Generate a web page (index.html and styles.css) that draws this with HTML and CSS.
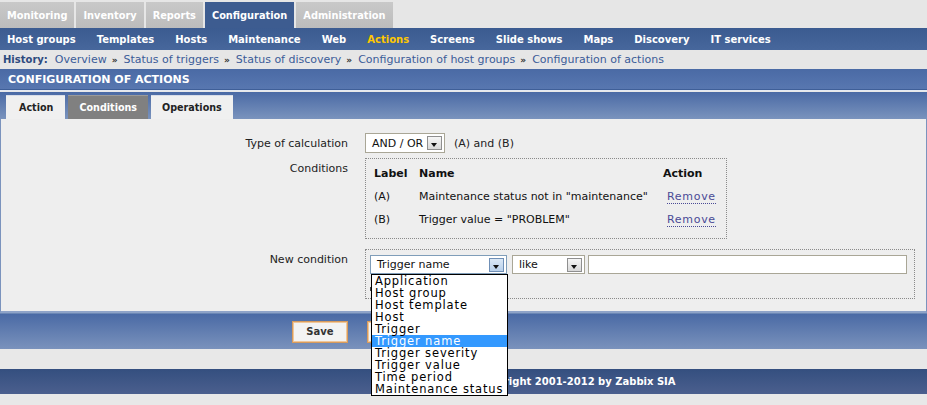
FILE: index.html
```html
<!DOCTYPE html>
<html>
<head>
<meta charset="utf-8">
<link rel="stylesheet" href="styles.css">
</head>
<body>
<div class="topnav">
  <span class="ttab">Monitoring</span>
  <span class="ttab">Inventory</span>
  <span class="ttab">Reports</span>
  <span class="ttab active">Configuration</span>
  <span class="ttab">Administration</span>
</div>
<div class="submenu">
  <span>Host groups</span>
  <span>Templates</span>
  <span>Hosts</span>
  <span>Maintenance</span>
  <span>Web</span>
  <span class="cur">Actions</span>
  <span>Screens</span>
  <span>Slide shows</span>
  <span>Maps</span>
  <span>Discovery</span>
  <span>IT services</span>
</div>
<div class="history">
  <b>History:</b>
  <a>Overview</a><i>»</i><a>Status of triggers</a><i>»</i><a>Status of discovery</a><i>»</i><a>Configuration of host groups</a><i>»</i><a>Configuration of actions</a>
</div>
<div class="header">CONFIGURATION OF ACTIONS</div>
<div class="tabbar">
  <span class="ftab">Action</span>
  <span class="ftab sel-tab">Conditions</span>
  <span class="ftab">Operations</span>
</div>
<div class="panel">
  <div class="form">
    <div class="lbl mid">Type of calculation</div>
    <div class="val row">
      <span class="sel calc"><span class="stext">AND / OR</span><span class="arr"></span></span>
      <span class="expr">(A) and (B)</span>
    </div>

    <div class="lbl top">Conditions</div>
    <div class="val">
      <div class="condbox">
        <div class="ctable">
          <div class="th">Label</div><div class="th">Name</div><div class="th">Action</div>
          <div>(A)</div><div>Maintenance status not in "maintenance"</div><div><a class="rm">Remove</a></div>
          <div>(B)</div><div>Trigger value = "PROBLEM"</div><div><a class="rm">Remove</a></div>
        </div>
      </div>
    </div>

    <div class="lbl top spaced">New condition</div>
    <div class="val spaced">
      <div class="newbox">
        <div class="newrow">
          <span class="dd-wrap">
            <span class="sel tname"><span class="stext">Trigger name</span><span class="arr focus"></span></span>
            <ul class="dropdown">
              <li>Application</li>
              <li>Host group</li>
              <li>Host template</li>
              <li>Host</li>
              <li>Trigger</li>
              <li class="hl">Trigger name</li>
              <li>Trigger severity</li>
              <li>Trigger value</li>
              <li>Time period</li>
              <li>Maintenance status</li>
            </ul>
          </span>
          <span class="sel like"><span class="stext">like</span><span class="arr"></span></span>
          <span class="inp"></span>
        </div>
        <div class="addrow"><span class="addmark"></span></div>
      </div>
    </div>
  </div>
</div>
<div class="btnbar">
  <span class="btn">Save</span>
  <span class="btn blank"></span>
</div>
<div class="copyright">Copyright 2001-2012 by Zabbix SIA</div>
</body>
</html>
```
FILE: styles.css
```css
* { box-sizing: border-box; }
html, body { margin: 0; padding: 0; }
body {
  background: #e8e8e8;
  font-family: "DejaVu Sans", Verdana, sans-serif;
  font-size: 11px;
  color: #111;
  width: 927px;
  height: 405px;
  overflow: hidden;
}

.topnav {
  height: 28px;
  display: flex;
  align-items: flex-end;
  gap: 2px;
  background: #e6e6e6;
}
.ttab {
  height: 26px;
  display: flex;
  align-items: center;
  padding: 0 7px;
  background: linear-gradient(#c9c9c9, #bcbcbc);
  color: #fff;
  font-weight: bold;
  font-size: 9.8px;
}
.ttab.active { background: #3d5c90; }

.submenu {
  height: 22px;
  display: flex;
  align-items: center;
  gap: 21px;
  padding-left: 7px;
  background: linear-gradient(#3b5b90, #47679c);
  color: #fff;
  font-weight: bold;
  font-size: 10px;
}
.submenu .cur { color: #ffc800; }

.history {
  height: 19px;
  display: flex;
  align-items: center;
  padding-left: 3px;
  background: #e6e6e6;
  font-size: 11px;
}
.history b { color: #2d4a7e; margin-right: 7px; font-size: 10px; }
.history a { color: #3b5c98; }
.history i { font-style: normal; color: #333; font-size: 9px; font-weight: bold; margin: 0 6px 0 5px; }

.header {
  height: 21px;
  display: flex;
  align-items: center;
  padding-left: 8px;
  padding-top: 1px;
  background: linear-gradient(#4a6aa5, #5877b0);
  color: #fff;
  font-weight: bold;
  font-size: 11px;
  border-bottom: 1px solid #3f5f98;
  box-shadow: 0 1px 0 #e4e9f2;
}

.tabbar {
  margin-top: 2px;
  height: 27px;
  display: flex;
  align-items: flex-end;
  gap: 3px;
  padding-left: 6px;
  background: linear-gradient(#4a6aa5, #7a93bd);
}
.ftab {
  height: 24px;
  display: flex;
  align-items: center;
  padding: 0 11px;
  background: #f0f0f0;
  color: #222;
  font-weight: bold;
  font-size: 9.6px;
  border-top: 1px solid #d8dde8;
}
.ftab:first-child { padding: 0 12px 0 13px; }
.ftab.sel-tab { background: #808080; color: #fff; border-top-color: #9a9a9a; }

.panel {
  background: #eeeeee;
  border-left: 1px solid #7b93bd;
  border-right: 1px solid #7b93bd;
  border-bottom: 2px solid #8ea3c8;
  height: 194px;
  padding-top: 14px;
}
.form {
  display: grid;
  grid-template-columns: 347px 1fr;
  column-gap: 17px;
  row-gap: 5px;
}
.lbl { text-align: right; color: #222; }
.lbl.mid { align-self: center; }
.lbl.top { padding-top: 4px; line-height: 14px; }
.spaced { margin-top: 5px; }
.val.row { display: flex; align-items: center; gap: 9px; }

.sel {
  display: inline-flex;
  align-items: center;
  justify-content: space-between;
  height: 19px;
  border: 1px solid #a9a696;
  background: #fff;
  padding-left: 6px;
  padding-right: 2px;
  color: #111;
  font-size: 11px;
}
.sel.calc { width: 80px; height: 20px; }
.sel.tname { width: 137px; border-color: #7f9db9; }
.sel.like { width: 73px; }
.arr {
  width: 15px;
  height: 14px;
  border: 1px solid #8f8f8f;
  background: linear-gradient(#f6f6f6, #d8d8d8);
  position: relative;
}
.arr::after {
  content: "";
  position: absolute;
  left: 3px;
  top: 6px;
  border-left: 3.5px solid transparent;
  border-right: 3.5px solid transparent;
  border-top: 4px solid #111;
}
.arr.focus { border-color: #6f8fb6; background: linear-gradient(#dbe8f6, #b9d0ea); }
.expr { color: #222; }

.condbox {
  width: 362px;
  border: 1px dotted #8a8a8a;
  padding: 3px 8px 7px 8px;
}
.ctable {
  display: grid;
  grid-template-columns: 45px 244px 1fr;
  grid-auto-rows: 23px;
  align-items: center;
}
.ctable .th { font-weight: bold; font-size: 11px; }
.ctable > div:nth-child(3n) { padding-left: 4px; }
.ctable > div:nth-child(3) { padding-left: 0; }
.rm {
  color: #4a4a96;
  letter-spacing: 0.7px;
  border-bottom: 1px dotted #4a4a96;
}

.newbox {
  width: 550px;
  border: 1px dotted #8a8a8a;
  padding: 5px 0 0 4px;
}
.newrow { display: flex; gap: 5px; align-items: center; }
.newrow .like { margin-right: -2px; }
.inp {
  width: 319px;
  height: 19px;
  border: 1px solid #a9a696;
  background: #fff;
}
.addrow { height: 24px; padding: 13px 0 0 0; }
.addmark { display: block; width: 2px; height: 4px; background: #444; }
.dd-wrap { position: relative; display: inline-flex; }
.dropdown {
  position: absolute;
  left: 1px;
  top: 19px;
  width: 137px;
  margin: 0;
  padding: 0;
  list-style: none;
  background: #fff;
  border: 1px solid #000;
  z-index: 10;
  font-size: 11.5px;
  letter-spacing: 0.85px;
  line-height: 12px;
}
.dropdown li { height: 12px; padding-left: 3px; white-space: nowrap; color: #000; }
.dropdown li.hl { background: #3399ff; color: #fff; }

.btnbar {
  height: 36px;
  display: flex;
  align-items: center;
  gap: 19px;
  padding-left: 292px;
  background: linear-gradient(#4a6aa5, #7a92bc);
  border-top: 1px solid #6a86b4;
}
.btn {
  width: 56px;
  height: 22px;
  display: flex;
  align-items: center;
  justify-content: center;
  background: #f3f3f3;
  border: 1px solid #d89b5c;
  box-shadow: inset 0 0 0 1px #f0c79a;
  font-weight: bold;
  font-size: 10px;
  color: #333;
}
.btn.blank { width: 64px; }

.copyright {
  margin-top: 20px;
  height: 25px;
  display: flex;
  align-items: center;
  padding-left: 476px;
  background: linear-gradient(#344f7f, #4b5f8e);
  color: #fff;
  font-weight: bold;
  font-size: 10px;
}
```
